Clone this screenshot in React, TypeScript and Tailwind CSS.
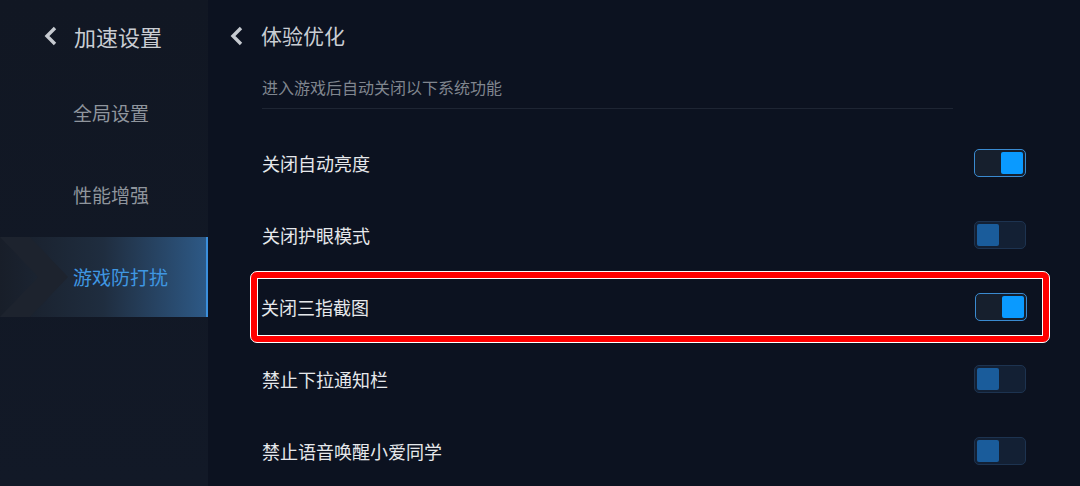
import React from 'react';

const font = { fontFamily: '"Noto Sans CJK SC", "Noto Sans", sans-serif' };

const Chevron = () => (
    <svg width="14" height="20" viewBox="0 0 14 20" className="shrink-0">
        <polyline points="11,2 3,10 11,18" fill="none" stroke="#c6cad0" strokeWidth="3.4" strokeLinejoin="miter" />
    </svg>
);

const Toggle = ({ on }: { on: boolean }) => (
    <div
        className={
            on
                ? 'w-[52px] h-[28px] rounded-[5px] border border-[#3a8ad0] bg-[#161f2d] p-[2px] flex justify-end'
                : 'w-[52px] h-[28px] rounded-[5px] border border-[#1d3350] bg-[#132034] p-[2px] flex justify-start'
        }
    >
        <div className={on ? 'w-[22px] h-full rounded-[2px] bg-[#0a9aff]' : 'w-[22px] h-full rounded-[2px] bg-[#1a5c9b]'} />
    </div>
);

const rows = [
    { label: '关闭自动亮度', on: true },
    { label: '关闭护眼模式', on: false },
    { label: '关闭三指截图', on: true, marked: true },
    { label: '禁止下拉通知栏', on: false },
    { label: '禁止语音唤醒小爱同学', on: false },
];

const Row = ({ label, on }: { label: string; on: boolean }) => (
    <div className="flex items-center justify-between h-full">
        <span className="text-[18px] text-[#e6e8eb]">{label}</span>
        <Toggle on={on} />
    </div>
);

export default function App() {
    return (
        <div className="w-[1080px] h-[486px] overflow-hidden flex bg-[#0c1220]" style={font}>
            {/* sidebar */}
            <div className="w-[208px] shrink-0 bg-gradient-to-b from-[#111723] to-[#121927]">
                <div className="h-[72px] flex items-center pl-[44px] gap-[16px]">
                    <Chevron />
                    <span className="text-[22px] text-[#c9cdd3]">加速设置</span>
                </div>
                <div className="h-[80px] mt-[1px] flex items-center pl-[73px] text-[19px] text-[#8f959d]">全局设置</div>
                <div className="h-[80px] mt-[2px] flex items-center pl-[73px] text-[19px] text-[#8f959d]">性能增强</div>
                <div className="relative h-[80px] mt-[2px] flex items-center pl-[73px] text-[19px] text-[#3f97e2] bg-gradient-to-r from-[#181e29] via-[#1f2d3f] to-[#2d5986] border-r-2 border-[#3b8fdc] overflow-hidden">
                    <svg className="absolute left-0 top-0" width="80" height="80" viewBox="0 0 80 80">
                        <polygon points="0,0 30,0 68,40 30,80 0,80 38,40" fill="#1d232e" />
                    </svg>
                    <span className="relative">游戏防打扰</span>
                </div>
            </div>

            {/* main */}
            <div className="flex-1">
                <div className="h-[72px] flex items-center pl-[22px] gap-[17px]">
                    <Chevron />
                    <span className="text-[21px] text-[#c9cdd3]">体验优化</span>
                </div>
                <div className="ml-[54px] w-[691px] h-[37px] pb-[6px] flex items-center text-[16px] text-[#80868f] border-b border-[#1e2533]">
                    进入游戏后自动关闭以下系统功能
                </div>
                <div className="ml-[54px] w-[764px] mt-[18px]">
                    {rows.map((r) =>
                        r.marked ? (
                            <div key={r.label} className="h-[72px] -ml-[12px] -mr-[24px] rounded-[7px] border border-white bg-[#ff0000] p-[6px]">
                                <div className="h-full border-[1.5px] border-white bg-[#0c1220] pl-[3px] pr-[15px]">
                                    <Row label={r.label} on={r.on} />
                                </div>
                            </div>
                        ) : (
                            <div key={r.label} className="h-[72px]">
                                <Row label={r.label} on={r.on} />
                            </div>
                        )
                    )}
                </div>
            </div>
        </div>
    );
}
